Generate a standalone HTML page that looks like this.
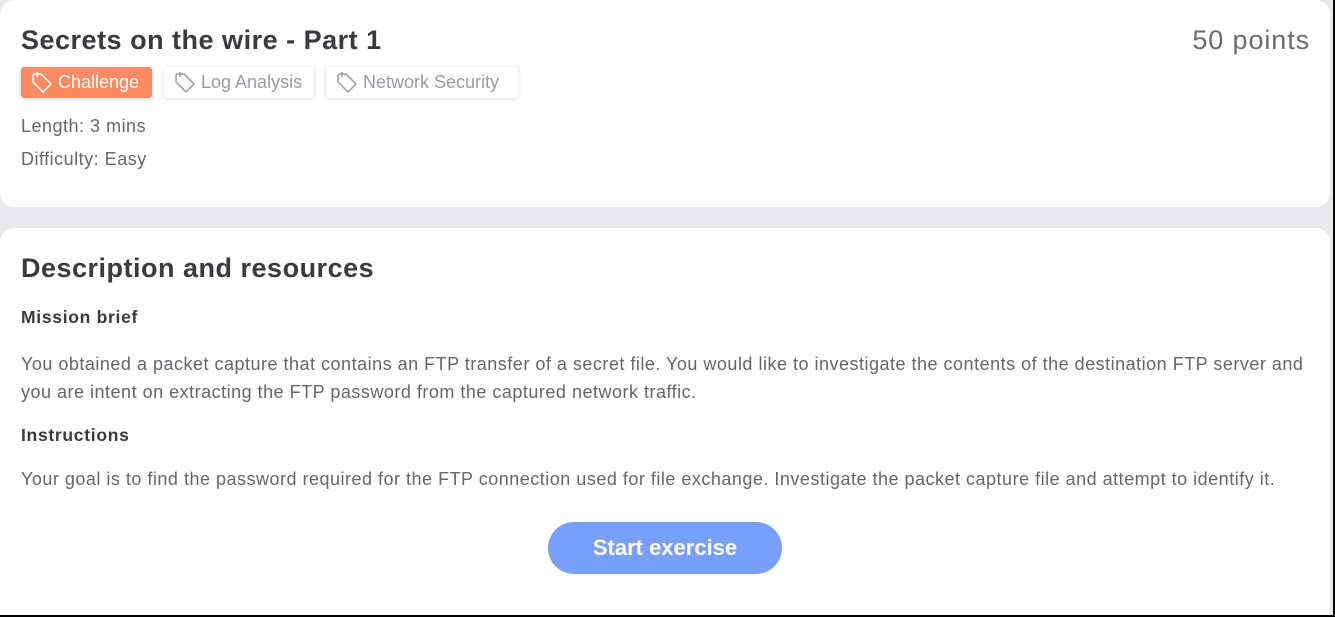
<!DOCTYPE html>
<html><head><style>
body{margin:0;width:1335px;height:617px;background:#000;font-family:"Liberation Sans",sans-serif;overflow:hidden;position:relative}
.bg{position:absolute;left:0;top:0;width:1333px;height:615px;background:#e9e9eb}
.card{position:absolute;left:0;width:1330px;background:#fff;border-radius:14px}
h1{position:absolute;left:21px;top:25px;margin:0;font-size:27px;letter-spacing:0.5px;font-weight:bold;color:#3a3a3f}
.pts{position:absolute;right:25px;top:25px;font-size:27px;letter-spacing:0.9px;color:#6b6b70}
.tag{position:absolute;top:67px;height:31px;border-radius:3px;box-shadow:0 1px 5px rgba(0,0,0,.15);background:#fff;color:#9a9aa5;font-size:18px;line-height:31px;padding-left:37px;padding-right:10px;box-sizing:border-box}
.tag svg{position:absolute;left:9px;top:4px}
.t{position:absolute;left:21px;font-size:18px;letter-spacing:0.5px;color:#66666c}
h2{position:absolute;left:21px;top:253px;margin:0;font-size:27px;letter-spacing:0.5px;font-weight:bold;color:#3a3a3f}
.b{position:absolute;left:21px;font-size:17.5px;letter-spacing:0.7px;font-weight:bold;color:#3a3a3f}
.btn{position:absolute;left:548px;top:522px;width:234px;height:52px;border-radius:26px;background:#78a0fb;color:#fff;font-size:22px;font-weight:bold;text-align:center;line-height:52px}
</style></head><body>
<div class="bg"></div>
<div class="card" style="top:0;height:207px"></div>
<div class="card" style="top:228px;height:387px;border-radius:14px 14px 0 0"></div>
<h1>Secrets on the wire - Part 1</h1>
<div class="pts">50 points</div>
<div class="tag" style="left:21px;width:131px;background:#fc8a62;color:#fff"><svg width="24" height="24" viewBox="0 0 24 24" fill="none" stroke="#fff" stroke-width="1.5"><path d="M3 4v7l10 10 8-8L11 3H4z"/><path d="M7 1v5"/></svg>Challenge</div>
<div class="tag" style="left:164px;width:150px"><svg width="24" height="24" viewBox="0 0 24 24" fill="none" stroke="#9a9aa5" stroke-width="1.5"><path d="M3 4v7l10 10 8-8L11 3H4z"/><path d="M7 1v5"/></svg>Log Analysis</div>
<div class="tag" style="left:326px;width:192px"><svg width="24" height="24" viewBox="0 0 24 24" fill="none" stroke="#9a9aa5" stroke-width="1.5"><path d="M3 4v7l10 10 8-8L11 3H4z"/><path d="M7 1v5"/></svg>Network Security</div>
<div class="t" style="top:116px">Length: 3 mins</div>
<div class="t" style="top:149px">Difficulty: Easy</div>
<h2>Description and resources</h2>
<div class="b" style="top:307px">Mission brief</div>
<div class="t" style="top:350px;line-height:28px;width:1290px">You obtained a packet capture that contains an FTP transfer of a secret file. You would like to investigate the contents of the destination FTP server and you are intent on extracting the FTP password from the captured network traffic.</div>
<div class="b" style="top:425px">Instructions</div>
<div class="t" style="top:469px">Your goal is to find the password required for the FTP connection used for file exchange. Investigate the packet capture file and attempt to identify it.</div>
<div class="btn">Start exercise</div>
</body></html>
